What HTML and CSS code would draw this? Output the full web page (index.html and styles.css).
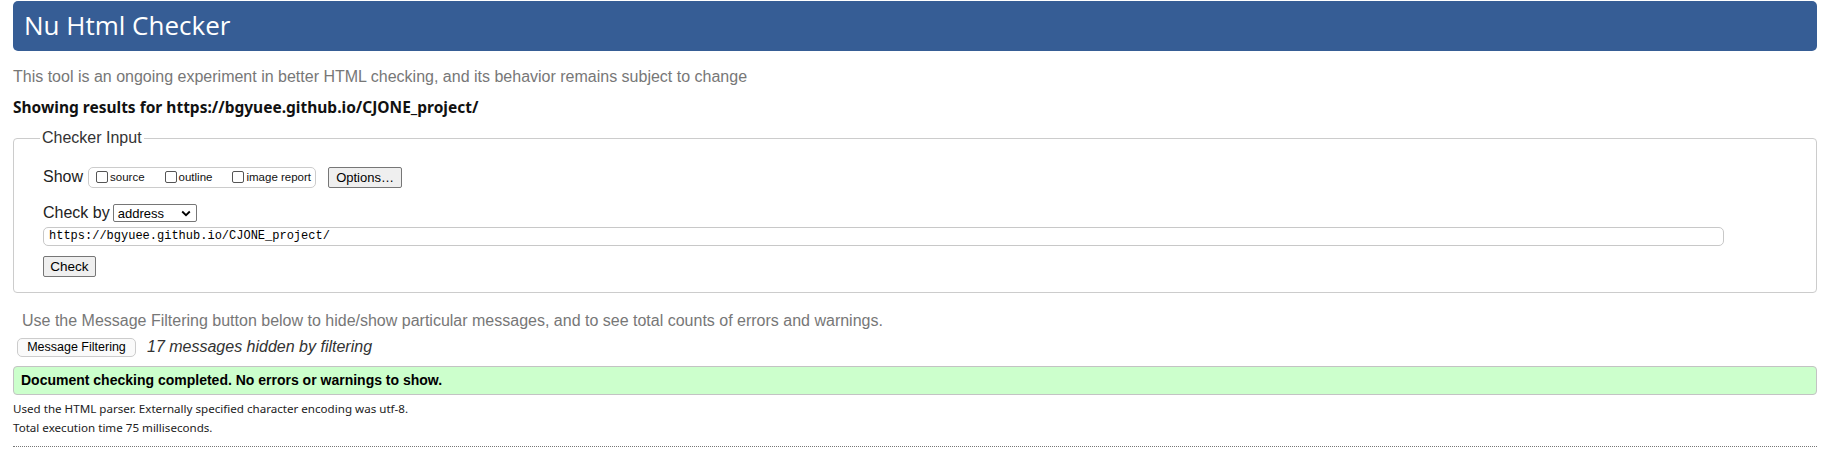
FILE: index.html
```html
<!DOCTYPE html>
<html>
<head>
<meta charset="utf-8">
<title>Nu Html Checker</title>
<link rel="stylesheet" href="styles.css">
</head>
<body>
<h1 class="banner">Nu Html Checker</h1>
<p class="tagline">This tool is an ongoing experiment in better HTML checking, and its behavior remains subject to change</p>
<p class="results-for">Showing results for https://bgyuee.github.io/CJONE_project/</p>
<fieldset class="checker">
  <legend class="legend">Checker Input</legend>
  <div class="show-row">
    <span class="label">Show</span>
    <span class="opts">
      <label class="opt"><span class="cb"></span>source</label>
      <label class="opt"><span class="cb"></span>outline</label>
      <label class="opt"><span class="cb"></span>image report</label>
    </span>
    <span class="btn btn-options">Options…</span>
  </div>
  <div class="by-row">
    <span class="label">Check by</span>
    <span class="select">address<svg class="chev" width="10" height="7" viewBox="0 0 10 7"><path d="M1.2 1.5 L5 5.2 L8.8 1.5" fill="none" stroke="#000" stroke-width="1.8"/></svg></span>
  </div>
  <div class="url">https://bgyuee.github.io/CJONE_project/</div>
  <div class="check-row"><span class="btn btn-check">Check</span></div>
</fieldset>
<p class="filter-note">Use the Message Filtering button below to hide/show particular messages, and to see total counts of errors and warnings.</p>
<div class="filter-row">
  <span class="btn btn-filter">Message Filtering</span>
  <span class="hidden-count">17 messages hidden by filtering</span>
</div>
<div class="success">Document checking completed. No errors or warnings to show.</div>
<p class="meta meta-first">Used the HTML parser. Externally specified character encoding was utf-8.</p>
<p class="meta">Total execution time 75 milliseconds.</p>
<div class="rule"></div>
</body>
</html>
```
FILE: styles.css
```css
html, body {
  background: #fff;
}
body {
  margin: 0;
  padding: 1px 16px 0 13px;
  font-family: "Liberation Sans", Arial, sans-serif;
  color: #222;
}
.banner {
  margin: 0;
  height: 50px;
  line-height: 48px;
  background: #365d95;
  color: #fff;
  border-radius: 5px;
  padding-left: 11px;
  font-family: "Open Sans", "Noto Sans", sans-serif;
  font-weight: 400;
  font-size: 26px;
}
.tagline {
  margin: 16px 0 0;
  line-height: 20px;
  font-size: 16px;
  color: #777;
}
.results-for {
  margin: 10px 0 0;
  line-height: 20px;
  font-family: "Noto Sans", sans-serif;
  font-weight: 700;
  font-size: 15.5px;
  color: #111;
}
.checker {
  margin: 12px 0 0;
  padding: 19px 0 15px 29px;
  border: 1px solid #ccc;
  border-radius: 4px;
  min-width: 0;
}
.legend {
  margin-left: -3px;
  padding: 0 2px;
  line-height: 18px;
  font-size: 16px;
  color: #333;
}
.label {
  font-size: 16px;
  color: #222;
}
.show-row {
  display: flex;
  align-items: center;
  height: 22px;
}
.show-row .label {
  margin-right: 5px;
}
.opts {
  display: flex;
  align-items: center;
  box-sizing: border-box;
  width: 228px;
  height: 21px;
  border: 1px solid #ccc;
  border-radius: 5px;
  padding: 0 0 0 7px;
  gap: 20px;
}
.opt {
  display: flex;
  align-items: center;
  font-size: 11.5px;
  color: #111;
}
.cb {
  box-sizing: border-box;
  width: 12px;
  height: 12px;
  border: 1px solid #555;
  border-radius: 2px;
  margin-right: 2px;
  background: #fff;
}
.btn {
  display: inline-flex;
  align-items: center;
  justify-content: center;
  box-sizing: border-box;
  background: #efefef;
  border: 1px solid #767676;
  border-radius: 2px;
  font-size: 13px;
  color: #000;
}
.btn-options {
  margin-left: 12px;
  height: 21px;
  width: 74px;
}
.by-row {
  display: flex;
  align-items: center;
  margin-top: 15px;
  height: 20px;
}
.by-row .label {
  margin-right: 3px;
}
.select {
  display: flex;
  align-items: center;
  justify-content: space-between;
  box-sizing: border-box;
  width: 84px;
  height: 18px;
  border: 1px solid #767676;
  border-radius: 2px;
  padding: 0 5px 0 4px;
  font-size: 13px;
  color: #000;
}
.url {
  margin-top: 4px;
  box-sizing: border-box;
  width: 1681px;
  height: 19px;
  line-height: 17px;
  border: 1px solid #c8c8c8;
  border-radius: 5px;
  padding-left: 5px;
  font-family: "Liberation Mono", "DejaVu Sans Mono", monospace;
  font-size: 12px;
  color: #000;
}
.check-row {
  margin-top: 10px;
  display: flex;
}
.btn-check {
  width: 53px;
  height: 21px;
  font-size: 13.5px;
}
.filter-note {
  margin: 18px 0 0 9px;
  line-height: 20px;
  font-size: 16px;
  color: #777;
}
.filter-row {
  display: flex;
  align-items: center;
  margin: 5px 0 0 4px;
  height: 22px;
}
.btn-filter {
  width: 119px;
  height: 19px;
  font-size: 12.5px;
  border-color: #ccc;
  border-radius: 5px;
  background: #fafafa;
}
.hidden-count {
  margin-left: 11px;
  font-style: italic;
  font-size: 16px;
  color: #333;
}
.success {
  margin-top: 8px;
  box-sizing: border-box;
  height: 29px;
  line-height: 27px;
  padding-left: 7px;
  background: #ccffcc;
  border: 1px solid #c3c3c3;
  border-radius: 4px;
  font-weight: 700;
  font-size: 14px;
  color: #000;
}
.meta {
  margin: 0;
  line-height: 19px;
  font-family: "Noto Sans", sans-serif;
  font-size: 11.6px;
  color: #222;
}
.meta-first {
  margin-top: 4px;
}
.rule {
  margin-top: 9px;
  border-top: 1px dotted #777;
}
```
